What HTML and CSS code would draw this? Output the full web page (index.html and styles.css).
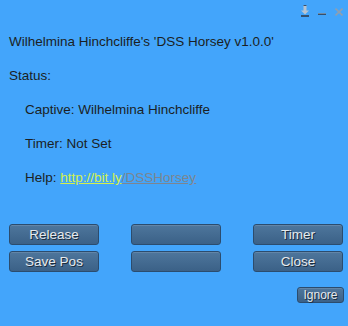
FILE: index.html
```html
<!DOCTYPE html>
<html lang="en">
<head>
    <meta charset="UTF-8">
    <title>DSS Horsey</title>
    <link rel="stylesheet" href="styles.css">
</head>
<body>
    <div class="floater">
        <div class="titlebar">
            <span class="tb-icon">
                <svg width="8" height="12" viewBox="0 0 8 12">
                    <rect x="2.5" y="0" width="3" height="6" fill="#b8c4d0"/>
                    <path d="M0 5.5 L8 5.5 L4 9.5 Z" fill="#b8c4d0"/>
                    <rect x="0" y="10" width="8" height="2" fill="#34506e"/>
                    <rect x="2.5" y="0" width="3" height="1" fill="#34506e"/>
                </svg>
            </span>
            <span class="tb-icon">
                <svg width="8" height="12" viewBox="0 0 8 12">
                    <rect x="0" y="8" width="8" height="2" fill="#34506e"/>
                    <rect x="0" y="8" width="8" height="1" fill="#6f8aa5"/>
                </svg>
            </span>
            <span class="tb-icon">
                <svg width="8" height="12" viewBox="0 0 8 12">
                    <path d="M0.5 3.5 L7.5 10.5 M7.5 3.5 L0.5 10.5" stroke="#8f9fb0" stroke-width="1.6"/>
                </svg>
            </span>
        </div>

        <div class="content">
            <p class="line">Wilhelmina Hinchcliffe's 'DSS Horsey v1.0.0'</p>
            <p class="line">Status:</p>
            <p class="line indent">Captive: Wilhelmina Hinchcliffe</p>
            <p class="line indent">Timer: Not Set</p>
            <p class="line indent">Help: <a class="link-host" href="#">http://bit.ly</a><a class="link-path" href="#">/DSSHorsey</a></p>
        </div>

        <div class="buttons">
            <button class="btn">Release</button>
            <button class="btn"></button>
            <button class="btn">Timer</button>
            <button class="btn">Save Pos</button>
            <button class="btn"></button>
            <button class="btn">Close</button>
        </div>

        <div class="footer">
            <button class="btn btn-small">Ignore</button>
        </div>
    </div>
</body>
</html>
```

FILE: styles.css
```css
* {
    margin: 0;
    padding: 0;
    box-sizing: border-box;
}

body {
    background-color: #43a5fb;
    font-family: 'Liberation Sans', Arial, sans-serif;
    font-size: 13.5px;
    color: #1b1f24;
}

.floater {
    width: 348px;
    height: 326px;
}

.titlebar {
    display: flex;
    justify-content: flex-end;
    gap: 9px;
    height: 25px;
    padding: 5px 5px 0 0;
}

.tb-icon {
    display: flex;
    align-items: flex-start;
    height: 12px;
}

.content {
    padding-left: 9px;
}

.line {
    line-height: 34px;
    white-space: nowrap;
}

.indent {
    padding-left: 16px;
}

.link-host {
    color: #d4f04c;
    text-decoration: underline;
}

.link-path {
    color: #7c8590;
    text-decoration: underline;
}

.buttons {
    display: grid;
    grid-template-columns: repeat(3, 90px);
    column-gap: 32px;
    row-gap: 6px;
    padding: 29px 0 0 9px;
}

.btn {
    height: 21px;
    border: 1px solid #2b4c6e;
    border-radius: 3px;
    background: linear-gradient(#4e769c, #3b6187);
    color: #e6eaee;
    font-family: 'Liberation Sans', Arial, sans-serif;
    font-size: 13.5px;
    text-shadow: 1px 1px 0 #1c2c3c;
    box-shadow: inset 0 1px 0 rgba(255, 255, 255, 0.12);
}

.footer {
    display: flex;
    justify-content: flex-end;
    padding: 15px 4px 0 0;
}

.btn-small {
    width: 47px;
    height: 16px;
    font-size: 12px;
    line-height: 14px;
}
```
